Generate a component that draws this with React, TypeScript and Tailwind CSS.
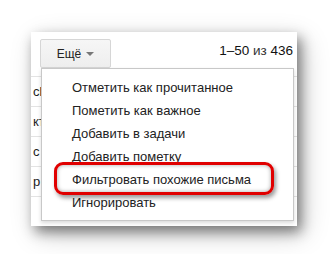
import React from "react";

const font = { fontFamily: '"Liberation Sans", Arial, sans-serif' };

export default function App() {
  const rows = ["сl", "кт", "с", "р", ""];
  const items = [
    "Отметить как прочитанное",
    "Пометить как важное",
    "Добавить в задачи",
    "Добавить пометку",
    "Фильтровать похожие письма",
    "Игнорировать",
  ];
  return (
    <div className="w-[330px] h-[254px] bg-white overflow-hidden pl-[31px] pt-[32px]" style={font}>
      <div className="relative w-[266px] h-[194px] bg-white shadow-[4px_6px_12px_rgba(0,0,0,0.45),6px_8px_26px_rgba(0,0,0,0.2)] flex flex-col overflow-visible">
        <div className="h-[36px] flex items-start justify-between pl-[9px] pr-[4px]">
          <div className="mt-[7px] w-[71px] h-[29px] rounded-[2px] border border-[#d6d6d6] bg-gradient-to-b from-[#f6f6f6] to-[#eeeeee] flex items-center justify-center gap-[5px] text-[12px] text-[#222]">
            <span>Ещё</span>
            <span className="w-0 h-0 border-l-[4px] border-r-[4px] border-t-[4px] border-l-transparent border-r-transparent border-t-[#777] mt-[1px]" />
          </div>
          <div className="mt-[10px] text-[13.5px] leading-[17px] text-[#333]">
            <span className="text-[#111]">1–50</span> из <span className="text-[#111]">436</span>
          </div>
        </div>
        <div className="h-[9px]" />
        <div className="flex flex-col overflow-hidden">
          {rows.map((r, i) => (
            <div key={i} className="h-[34px] border-t border-[#e3e3e3] flex items-center text-[13px] text-[#222] pl-[2px] overflow-hidden">
              <span>{r}</span>
            </div>
          ))}
        </div>

        <div className="absolute left-[10px] top-[36px] w-[253px] h-[153px] bg-white border border-[#c8c8c8] shadow-[0_2px_4px_rgba(0,0,0,0.15)] pt-[7px] pb-[6px] flex flex-col">
          {items.map((t) => (
            <div key={t} className="h-[23px] flex items-center pl-[30px] text-[13px] text-[#222] whitespace-nowrap">
              {t}
            </div>
          ))}
          <div className="absolute left-[12px] top-[93px] w-[220px] h-[33px] rounded-[9px] border-[3px] border-[#e00000] shadow-[2px_3px_4px_rgba(0,0,0,0.4),inset_0_0_4px_rgba(0,0,0,0.35)]" />
        </div>
      </div>
    </div>
  );
}
